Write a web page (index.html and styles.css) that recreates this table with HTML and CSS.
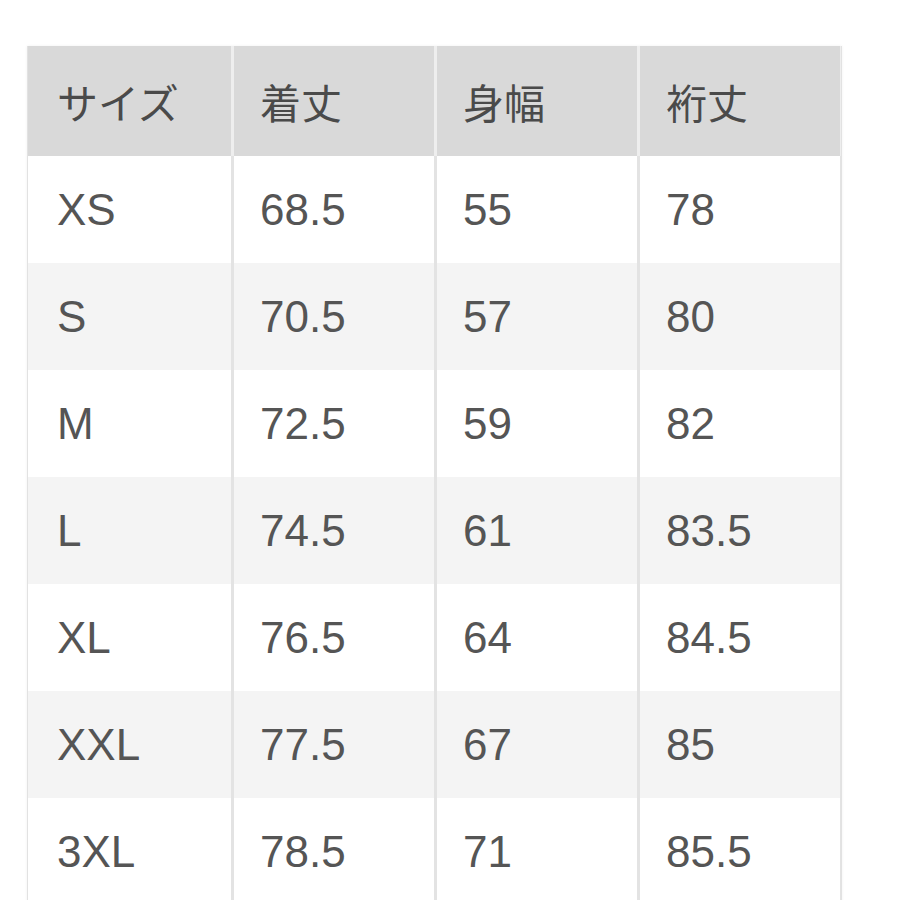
FILE: index.html
```html
<!DOCTYPE html>
<html lang="ja">
<head>
<meta charset="utf-8">
<link rel="stylesheet" href="styles.css">
</head>
<body>
<div class="sheet">
  <div class="row head">
    <div class="cell">サイズ</div><div class="cell">着丈</div><div class="cell">身幅</div><div class="cell">裄丈</div>
  </div>
  <div class="row">
    <div class="cell">XS</div><div class="cell">68.5</div><div class="cell">55</div><div class="cell">78</div>
  </div>
  <div class="row alt">
    <div class="cell">S</div><div class="cell">70.5</div><div class="cell">57</div><div class="cell">80</div>
  </div>
  <div class="row">
    <div class="cell">M</div><div class="cell">72.5</div><div class="cell">59</div><div class="cell">82</div>
  </div>
  <div class="row alt">
    <div class="cell">L</div><div class="cell">74.5</div><div class="cell">61</div><div class="cell">83.5</div>
  </div>
  <div class="row">
    <div class="cell">XL</div><div class="cell">76.5</div><div class="cell">64</div><div class="cell">84.5</div>
  </div>
  <div class="row alt">
    <div class="cell">XXL</div><div class="cell">77.5</div><div class="cell">67</div><div class="cell">85</div>
  </div>
  <div class="row">
    <div class="cell">3XL</div><div class="cell">78.5</div><div class="cell">71</div><div class="cell">85.5</div>
  </div>
</div>
</body>
</html>
```
FILE: styles.css
```css
html, body {
  margin: 0;
  padding: 0;
  background: #ffffff;
  overflow: hidden;
}
body {
  font-family: "Liberation Sans", "Noto Sans CJK JP", sans-serif;
  color: #555555;
}
.sheet {
  margin: 46px 0 0 27px;
  width: 813px;
  border-left: 1px solid #e2e2e2;
  border-right: 1px solid #e2e2e2;
  box-shadow: 0 0 3px rgba(0,0,0,0.06);
}
.row {
  display: grid;
  grid-template-columns: 203px 200px 200px 200px;
  column-gap: 3px;
  height: 107px;
  background: #e3e3e3;
}
.cell {
  display: flex;
  align-items: center;
  padding-left: 26px;
  font-size: 44px;
  background: #ffffff;
}
.cell:first-child {
  padding-left: 29px;
}
.row.alt .cell {
  background: #f4f4f4;
}
.row.head {
  height: 110px;
  background: #eeeeee;
}
.row.head .cell {
  background: #d9d9d9;
  font-family: "Noto Sans CJK JP", sans-serif;
  font-size: 41px;
  color: #4a4a4a;
  padding-bottom: 0;
}
```
